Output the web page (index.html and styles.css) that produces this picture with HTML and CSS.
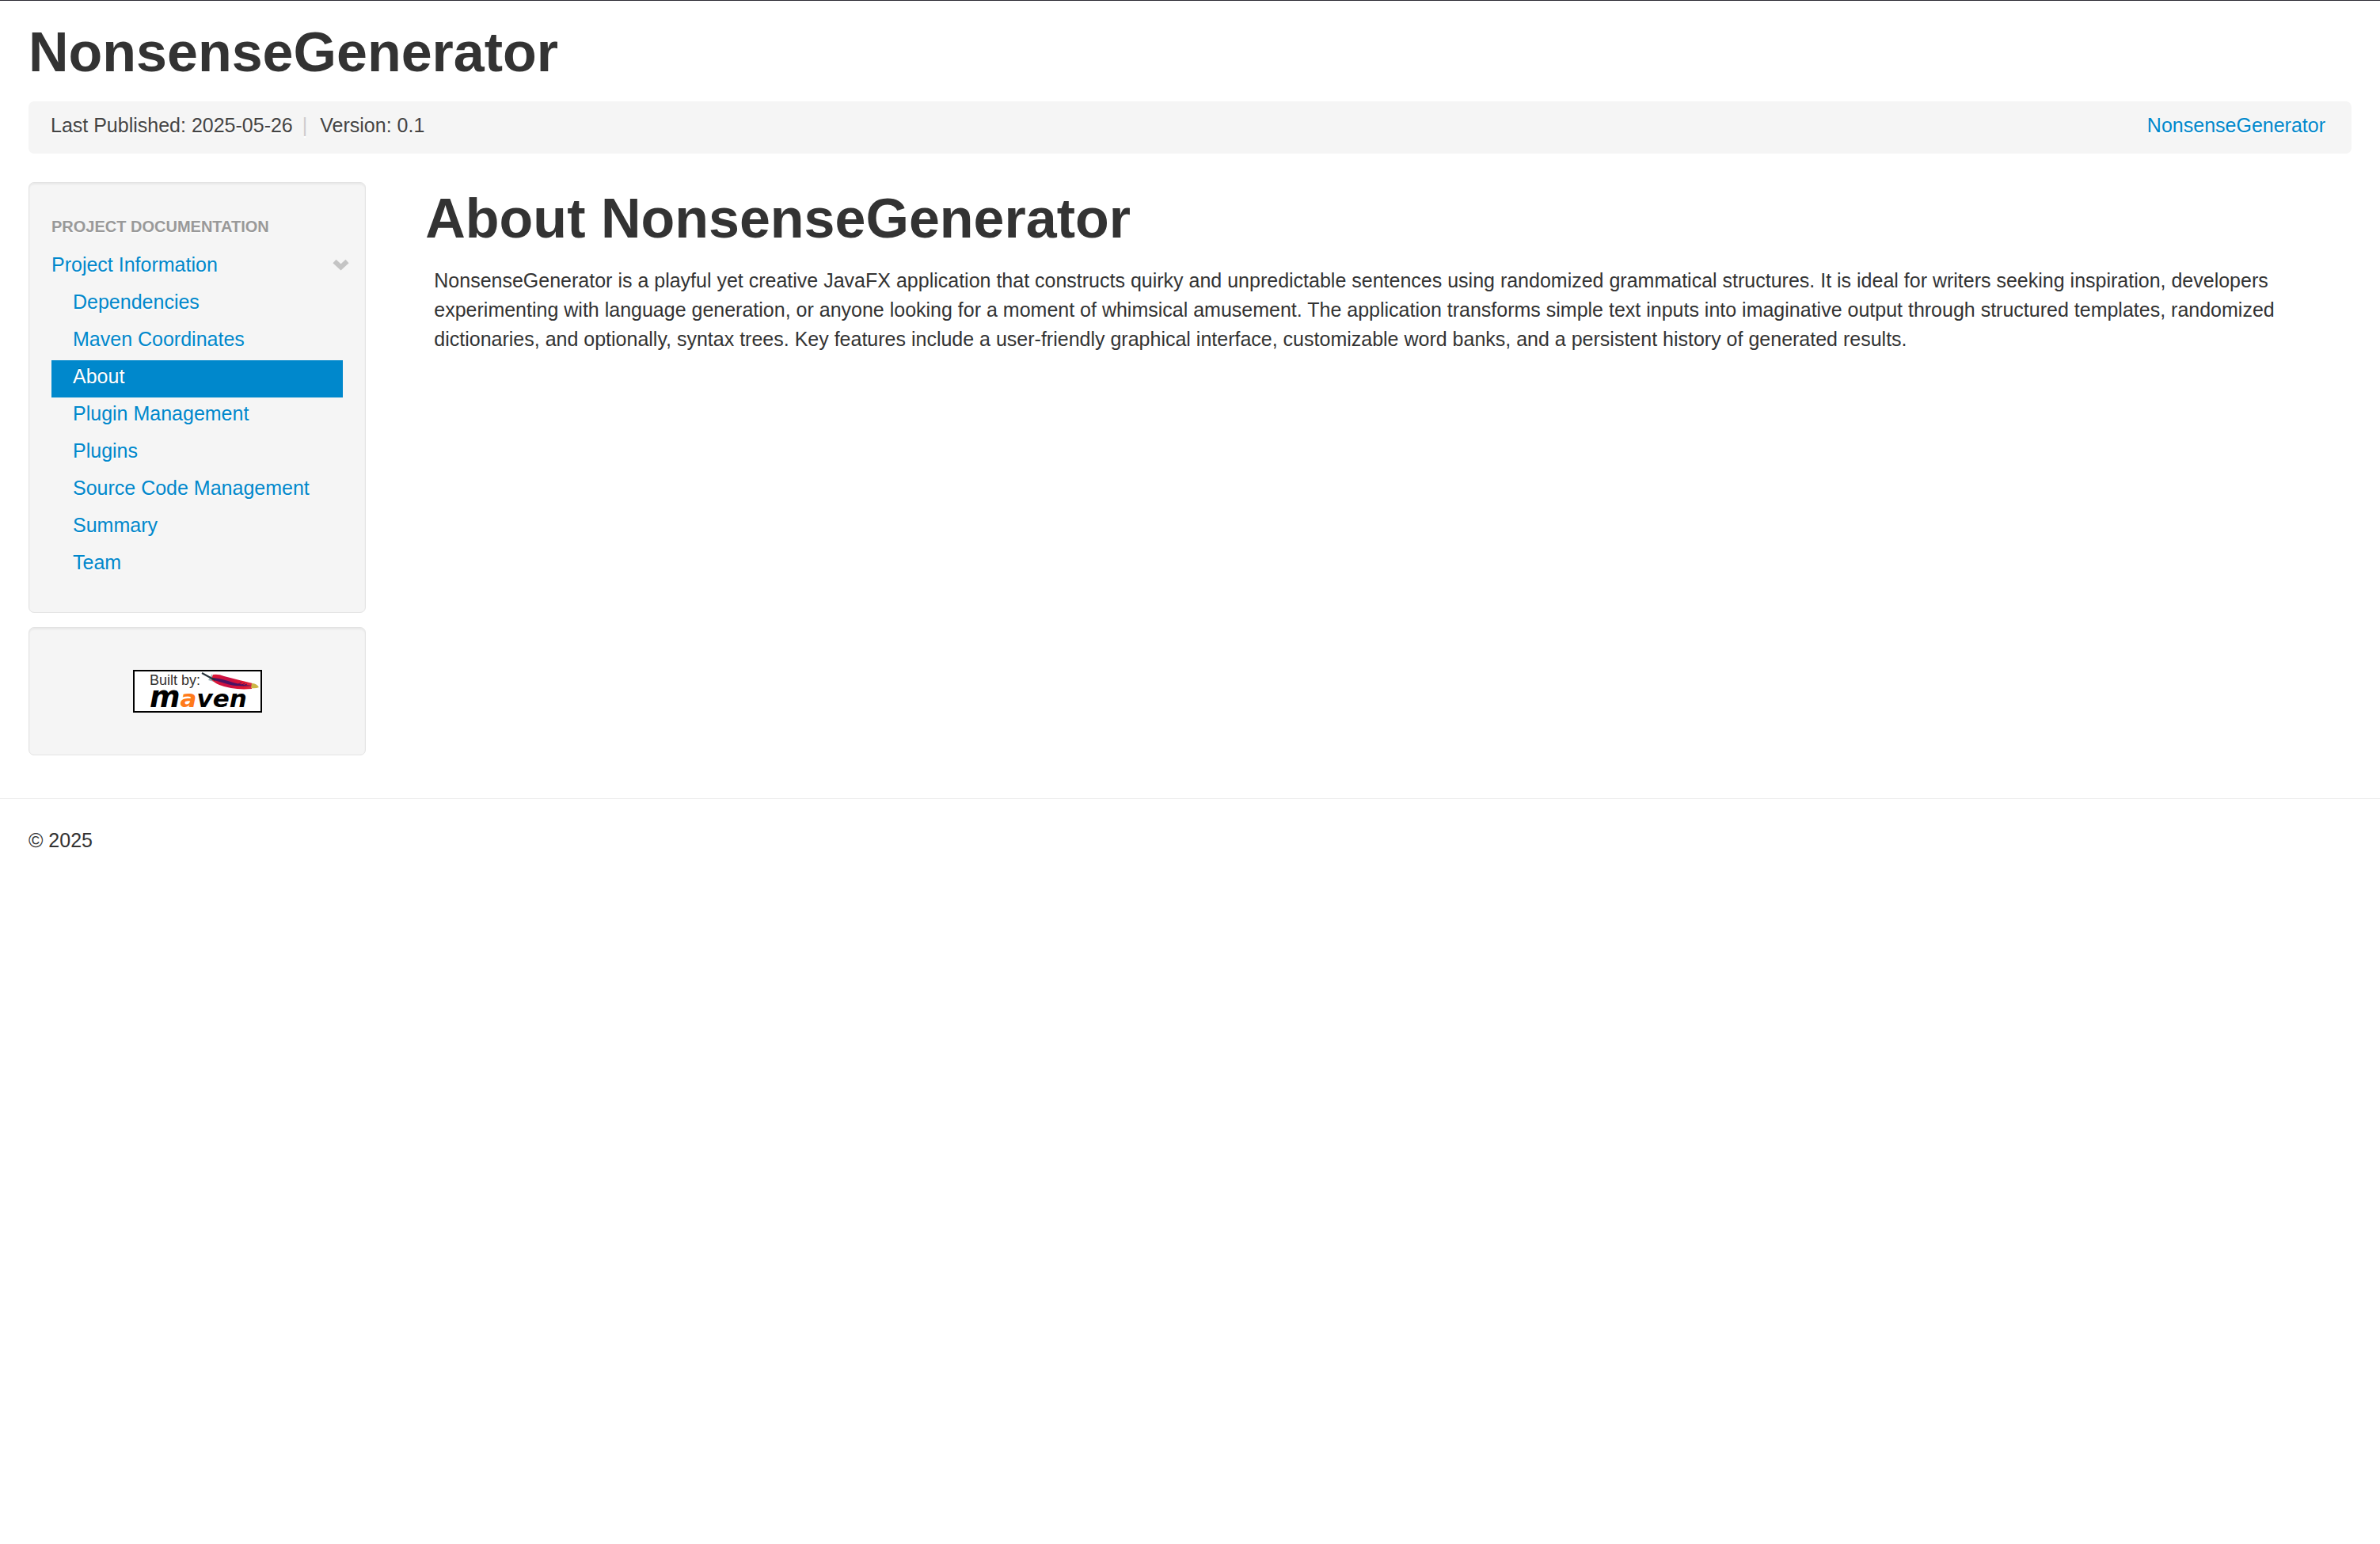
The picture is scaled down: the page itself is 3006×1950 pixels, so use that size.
FILE: index.html
```html
<!DOCTYPE html>
<html lang="en">
<head>
<meta charset="utf-8">
<meta name="viewport" content="width=device-width, initial-scale=1">
<title>NonsenseGenerator – About</title>
<link rel="stylesheet" href="styles.css">
</head>
<body>
<div class="container">
  <header>
    <h1 class="banner">NonsenseGenerator</h1>
    <div class="breadcrumb">
      <span>Last Published: 2025-05-26</span>
      <span class="divider">|</span>
      <span>Version: 0.1</span>
      <a class="project-link" href="#">NonsenseGenerator</a>
    </div>
  </header>
  <div class="columns">
    <div class="sidebar">
      <nav class="well menu">
        <h2 class="menu-header">Project Documentation</h2>
        <ul class="menu-list">
          <li>
            <a class="menu-item parent" href="#">Project Information
              <svg class="chevron" width="21" height="15" viewBox="0 0 21 15" aria-hidden="true"><path d="M2.500 3L10.500 10.500L18.500 3" fill="none" stroke="#c4c4c4" stroke-width="6"/></svg>
            </a>
            <ul class="menu-list nested">
              <li><a class="menu-item" href="#">Dependencies</a></li>
              <li><a class="menu-item" href="#">Maven Coordinates</a></li>
              <li><a class="menu-item active" href="#" aria-current="page">About</a></li>
              <li><a class="menu-item" href="#">Plugin Management</a></li>
              <li><a class="menu-item" href="#">Plugins</a></li>
              <li><a class="menu-item" href="#">Source Code Management</a></li>
              <li><a class="menu-item" href="#">Summary</a></li>
              <li><a class="menu-item" href="#">Team</a></li>
            </ul>
          </li>
        </ul>
      </nav>
      <div class="well powered">
        <a class="badge" href="#" aria-label="Built by Maven">
          <svg width="163" height="54" viewBox="0 0 163 54">
            <defs>
              <linearGradient id="feather" x1="0" x2="1" y1="0" y2="0">
                <stop offset="0" stop-color="#e01b35"/>
                <stop offset="0.400" stop-color="#c80f45"/>
                <stop offset="0.800" stop-color="#e0182f"/>
                <stop offset="1" stop-color="#d8324a"/>
              </linearGradient>
            </defs>
            <rect x="1" y="1" width="161" height="52" fill="#fff" stroke="#000" stroke-width="2"/>
            <text class="badge-small" x="21" y="19">Built by:</text>
            <text class="badge-name" x="21" y="47"><tspan class="badge-m">m</tspan><tspan class="badge-a">a</tspan>ven</text>
            <path d="M95 13L100 5L102 15Z" fill="#9fb4b8"/>
            <path d="M101 6Q108 5 115 8Q134 13 151 17L150 24Q127 26 109 19Q102 16 99 12Z" fill="url(#feather)"/>
            <path d="M99 10Q107 10 120 14Q134 19 151 20Q130 22 116 17Q106 14 99 12Z" fill="#4a1363"/>
            <path d="M133 18l4-2M136 20l5-3M139 20l5-2" stroke="#4a1363" stroke-width="1"/>
            <path d="M150 17Q156 17 159 22Q155 24 149 23Z" fill="#cdb747"/>
            <path d="M87 4L98 10L104 13" fill="none" stroke="#26323a" stroke-width="2"/>
          </svg>
        </a>
      </div>
    </div>
    <main class="content">
      <h1>About NonsenseGenerator</h1>
      <p>NonsenseGenerator is a playful yet creative JavaFX application that constructs quirky and unpredictable sentences using randomized grammatical structures. It is ideal for writers seeking inspiration, developers experimenting with language generation, or anyone looking for a moment of whimsical amusement. The application transforms simple text inputs into imaginative output through structured templates, randomized dictionaries, and optionally, syntax trees. Key features include a user-friendly graphical interface, customizable word banks, and a persistent history of generated results.</p>
    </main>
  </div>
</div>
<footer class="footer">
  <p>© 2025</p>
</footer>
</body>
</html>
```
FILE: styles.css
```css
* {
  box-sizing: border-box;
}

body {
  margin: 0;
  border-top: 1px solid #2b2a33;
  background: #fff;
  color: #333;
  font: 25px/37px "Liberation Sans", Arial, sans-serif;
}

h1,
h2,
p,
ul {
  margin: 0;
  padding: 0;
}

h1 {
  font-size: 70px;
  line-height: 73px;
}

a {
  color: #08c;
  text-decoration: none;
}

.container {
  padding: 29px 36px 54px;
}

.breadcrumb {
  display: flex;
  margin: 25px 0 36px;
  padding: 12px 33px 17px 28px;
  border-radius: 7px;
  background: #f5f5f5;
  color: #444;
  text-shadow: 0 2px 0 #fff;
}

.divider {
  padding: 0 16px 0 12px;
  color: #ccc;
}

.project-link {
  margin-left: auto;
}

.columns {
  display: grid;
  grid-template-columns: 14.53% 1fr;
  column-gap: 75px;
  align-items: start;
}

.sidebar {
  display: grid;
  gap: 18px;
}

.well {
  border: 1px solid #e3e3e3;
  border-radius: 7px;
  background: #f5f5f5;
  box-shadow: inset 0 2px 2px rgba(0, 0, 0, 0.05);
}

.menu {
  padding: 37px 28px 36px;
  text-shadow: 0 2px 0 rgba(255, 255, 255, 0.5);
}

.menu-header {
  margin-bottom: 9px;
  color: #999;
  font-size: 20px;
  line-height: 37px;
  text-transform: uppercase;
}

.menu-list {
  list-style: none;
}

.menu-item {
  display: block;
  padding: 2px 0 8px;
  white-space: nowrap;
}

.nested .menu-item {
  padding-left: 27px;
}

.nested .active {
  background: #08c;
  color: #fff;
  text-shadow: 0 -1px 0 rgba(0, 0, 0, 0.2);
}

.parent {
  display: flex;
  align-items: center;
  justify-content: space-between;
  margin-right: -8px;
}

.powered {
  padding: 53px;
  text-align: center;
}

.badge,
.badge svg {
  display: block;
  margin: 0 auto;
}

.badge-small {
  fill: #333;
  font-size: 18px;
}

.badge-name {
  fill: #000;
  font: italic bold 31px "DejaVu Sans", sans-serif;
}

.badge-m {
  font-size: 37px;
}

.badge-a {
  fill: #ff7a1a;
}

.content {
  padding-top: 10px;
}

.content p {
  padding: 23px 11px 0;
}

.footer {
  padding: 34px 36px;
  border-top: 1px solid #eee;
}
```
